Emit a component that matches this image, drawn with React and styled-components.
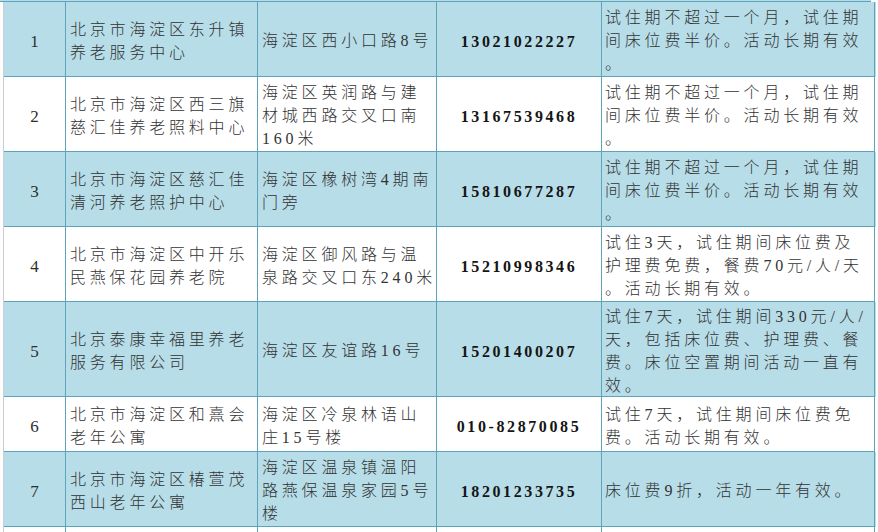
import React from "react";
import styled, { createGlobalStyle } from "styled-components";

const Global = createGlobalStyle`
  html, body { margin: 0; padding: 0; background: #ffffff; }
  body { width: 878px; height: 532px; overflow: hidden; }
`;

const BLUE = "#b7dde8";
const LINE = "#5ea3b9";

const Page = styled.div`
  width: 878px;
  height: 532px;
  background: #fdfdfd;
  overflow: hidden;
`;

const Table = styled.div`
  margin-left: 3px;
  width: 872px;
  border-left: 1px solid #c9cfd2;
  display: flex;
  flex-direction: column;
`;

const TopStrip = styled.div`
  height: 1px;
  background: ${BLUE};
  border-bottom: 1px solid ${LINE};
  margin-left: -4px;
  width: 875px;
`;

const Row = styled.div`
  display: grid;
  grid-template-columns: 62px 192px 179px 165px 273px;
  height: ${(p) => p.$h}px;
  background: ${(p) => (p.$blue ? BLUE : "#ffffff")};
`;

const Cell = styled.div`
  box-sizing: border-box;
  border-right: 1px solid ${LINE};
  border-bottom: 1px solid ${LINE};
  display: flex;
  flex-direction: column;
  justify-content: center;
  overflow: hidden;
  padding-top: 3px;
`;

const NumCell = styled(Cell)`
  align-items: center;
  padding-top: 6px;
  font-family: "Liberation Serif", "Noto Sans CJK SC", serif;
  font-size: 17px;
  color: #2e2e2e;
`;

const TextCell = styled(Cell)`
  padding-left: ${(p) => p.$pl || 4}px;
  font-family: "Liberation Serif", "Noto Sans CJK SC", serif;
  font-size: 16px;
  font-weight: 300;
  letter-spacing: 3.8px;
  line-height: 23px;
  color: #333333;
`;

const Line = styled.div`
  white-space: nowrap;
`;

const PhoneCell = styled(Cell)`
  align-items: center;
  padding-top: 6px;
  font-family: "Liberation Serif", serif;
  font-weight: 700;
  font-size: 16px;
  letter-spacing: 2.6px;
  color: #151515;
`;

const Tail = styled.div`
  height: 6px;
  background: #ffffff;
  display: grid;
  grid-template-columns: 62px 192px 179px 165px 273px;
`;

const TailCell = styled.div`
  border-right: 1px solid ${LINE};
`;

const rows = [
  {
    n: "1", h: 75, blue: true,
    name: ["北京市海淀区东升镇", "养老服务中心"],
    addr: ["海淀区西小口路8号"],
    phone: "13021022227",
    desc: ["试住期不超过一个月，试住期", "间床位费半价。活动长期有效", "。"],
  },
  {
    n: "2", h: 75, blue: false,
    name: ["北京市海淀区西三旗", "慈汇佳养老照料中心"],
    addr: ["海淀区英润路与建", "材城西路交叉口南", "160米"],
    phone: "13167539468",
    desc: ["试住期不超过一个月，试住期", "间床位费半价。活动长期有效", "。"],
  },
  {
    n: "3", h: 75, blue: true,
    name: ["北京市海淀区慈汇佳", "清河养老照护中心"],
    addr: ["海淀区橡树湾4期南", "门旁"],
    phone: "15810677287",
    desc: ["试住期不超过一个月，试住期", "间床位费半价。活动长期有效", "。"],
  },
  {
    n: "4", h: 75, blue: false,
    name: ["北京市海淀区中开乐", "民燕保花园养老院"],
    addr: ["海淀区御风路与温", "泉路交叉口东240米"],
    phone: "15210998346",
    desc: ["试住3天，试住期间床位费及", "护理费免费，餐费70元/人/天", "。活动长期有效。"],
  },
  {
    n: "5", h: 95, blue: true,
    name: ["北京泰康幸福里养老", "服务有限公司"],
    addr: ["海淀区友谊路16号"],
    phone: "15201400207",
    desc: ["试住7天，试住期间330元/人/", "天，包括床位费、护理费、餐", "费。床位空置期间活动一直有", "效。"],
  },
  {
    n: "6", h: 55, blue: false,
    name: ["北京市海淀区和熹会", "老年公寓"],
    addr: ["海淀区冷泉林语山", "庄15号楼"],
    phone: "010-82870085",
    desc: ["试住7天，试住期间床位费免", "费。活动长期有效。"],
  },
  {
    n: "7", h: 75, blue: true,
    name: ["北京市海淀区椿萱茂", "西山老年公寓"],
    addr: ["海淀区温泉镇温阳", "路燕保温泉家园5号", "楼"],
    phone: "18201233735",
    desc: ["床位费9折，活动一年有效。"],
  },
];

const Lines = ({ items }) =>
  items.map((t, i) => <Line key={i}>{t}</Line>);

export default function App() {
  return (
    <Page>
      <Global />
      <TopStrip />
      <Table>
        {rows.map((r) => (
          <Row key={r.n} $h={r.h} $blue={r.blue}>
            <NumCell>{r.n}</NumCell>
            <TextCell $pl={4}>
              <Lines items={r.name} />
            </TextCell>
            <TextCell $pl={4}>
              <Lines items={r.addr} />
            </TextCell>
            <PhoneCell>{r.phone}</PhoneCell>
            <TextCell $pl={3}>
              <Lines items={r.desc} />
            </TextCell>
          </Row>
        ))}
        <Tail>
          <TailCell />
          <TailCell />
          <TailCell />
          <TailCell />
          <TailCell />
        </Tail>
      </Table>
    </Page>
  );
}
